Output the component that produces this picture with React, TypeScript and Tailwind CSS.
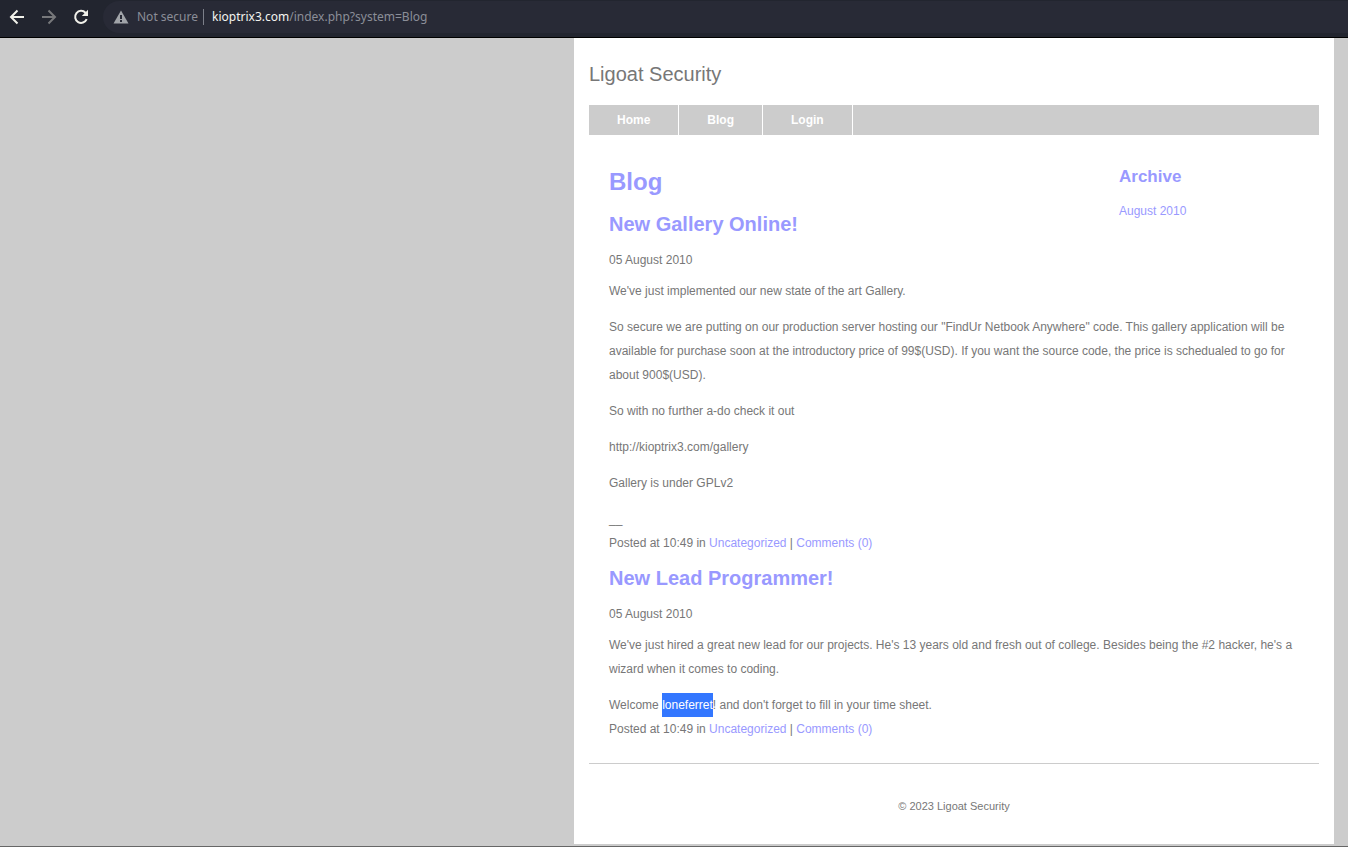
import type { ReactNode } from 'react';

const linkClass = 'text-[#9999ff] hover:underline';

function BrowserBar() {
  return (
    <header className="flex h-[38px] items-start border-b border-black bg-[#22252f] font-['Noto_Sans',sans-serif] text-xs">
      <div className="flex h-[34px] w-[103px] shrink-0 items-center gap-4 pl-[9px]">
        <button type="button" aria-label="Back" className="text-[#f1f1ea]">
          <svg width="16" height="16" viewBox="0 0 16 16" fill="none" stroke="currentColor" strokeWidth="2">
            <path d="M15 8H2.5M8.5 1.5 2 8l6.500 6.500" />
          </svg>
        </button>
        <button type="button" aria-label="Forward" className="text-[#77787b]">
          <svg width="16" height="16" viewBox="0 0 16 16" fill="none" stroke="currentColor" strokeWidth="2">
            <path d="M1 8H13.500M7.500 1.500 14 8l-6.500 6.500" />
          </svg>
        </button>
        <button type="button" aria-label="Reload" className="text-[#f1f1ea]">
          <svg width="16" height="16" viewBox="0 0 16 16" fill="none">
            <path d="M13.700 10.200A6 6 0 1 1 12.500 3.700L14 5.200" stroke="currentColor" strokeWidth="2" />
            <path d="M15 .8V7H8.800z" fill="currentColor" />
          </svg>
        </button>
      </div>
      <div className="mt-px flex h-8 grow items-center rounded-l-full bg-[#282a36] pl-[10px]">
        <button type="button" className="flex items-center gap-2 text-[#8b8e98]">
          <svg width="16" height="14" viewBox="0 0 16 14" aria-hidden="true">
            <path d="M8 .5 15.5 13.5H.5z" fill="#a1a4a9" />
            <path d="M7 5h2v4H7zM7 10h2v2H7z" fill="#282a36" />
          </svg>
          Not secure
        </button>
        <span className="mr-2 ml-[5px] h-4 w-px bg-[#7c7f89]" />
        <div role="textbox" aria-label="Address" className="whitespace-nowrap text-[#8b8e98]">
          <span className="text-[#f4f4f0]">kioptrix3.com</span>/index.php?system=Blog
        </div>
      </div>
    </header>
  );
}

function Post({ title, children }: { title: string; children: ReactNode }) {
  return (
    <article>
      <h2 className="mb-3 text-[20px] leading-[23px] font-bold text-[#9999ff]">{title}</h2>
      <p>05 August 2010</p>
      <div className="mt-[7px]">{children}</div>
      <p>
        Posted at 10:49 in{' '}
        <a href="#uncategorized" className={linkClass}>Uncategorized</a> |{' '}
        <a href="#comments" className={linkClass}>Comments (0)</a>
      </p>
    </article>
  );
}

export default function App() {
  return (
    <div className="flex min-h-screen flex-col border-b border-[#666666] bg-[#cccccc]">
      <BrowserBar />
      <div className="flex justify-end pr-[14px] pb-[2px]">
        <div className="w-full max-w-[760px] bg-white px-[15px] font-['Liberation_Sans',Arial,sans-serif] text-xs leading-6 text-[#777777]">
          <div className="pt-6 pb-[19px] text-[20px]">Ligoat Security</div>
          <nav className="flex h-[30px] bg-[#cccccc] font-bold text-white">
            {['Home', 'Blog', 'Login'].map((item) => (
              <a key={item} href={'#' + item.toLowerCase()} className="flex items-center border-r border-white px-7">
                {item}
              </a>
            ))}
          </nav>
          <main className="border-b border-[#cccccc] px-5 pt-[31px] pb-[22px]">
            <aside className="float-right w-[180px]">
              <h3 className="text-[17px] leading-[22px] font-bold text-[#9999ff]">Archive</h3>
              <ul className="mt-[11px]">
                <li><a href="#august-2010" className={linkClass}>August 2010</a></li>
              </ul>
            </aside>
            <h1 className="mb-[15px] text-2xl font-bold text-[#9999ff]">Blog</h1>
            <div className="space-y-3">
              <Post title="New Gallery Online!">
                <p className="mb-3">We've just implemented our new state of the art Gallery.</p>
                <p className="mb-3">
                  So secure we are putting on our production server hosting our "FindUr Netbook Anywhere" code. This
                  gallery application will be available for purchase soon at the introductory price of 99$(USD). If
                  you want the source code, the price is schedualed to go for about 900$(USD).
                </p>
                <p className="mb-3">So with no further a-do check it out</p>
                <p className="mb-3">http://kioptrix3.com/gallery</p>
                <p className="mb-3">Gallery is under GPLv2</p>
                <p>__</p>
              </Post>
              <Post title="New Lead Programmer!">
                <p className="mb-3">
                  We've just hired a great new lead for our projects. He's 13 years old and fresh out of college.
                  Besides being the #2 hacker, he's a wizard when it comes to coding.
                </p>
                <p>
                  Welcome <mark className="bg-[#3377ff] py-[5px] text-white">loneferret</mark>! and don't forget to
                  fill in your time sheet.
                </p>
              </Post>
            </div>
          </main>
          <footer className="pt-[30px] pb-[26px] text-center text-[11px]">© 2023 Ligoat Security</footer>
        </div>
      </div>
    </div>
  );
}
